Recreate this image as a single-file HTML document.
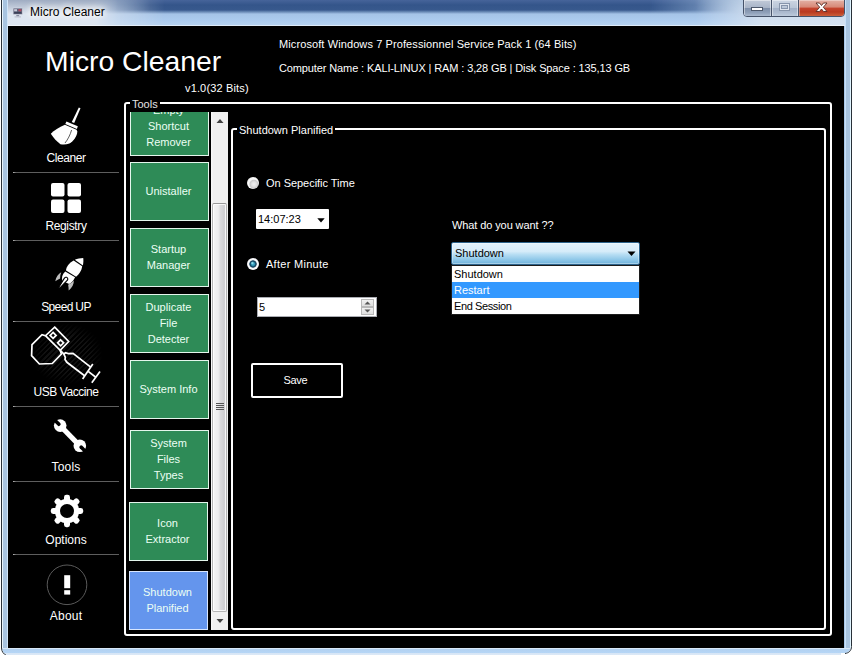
<!DOCTYPE html>
<html><head><meta charset="utf-8">
<style>
html,body{margin:0;padding:0;}
body{width:853px;height:655px;position:relative;overflow:hidden;background:#a9c8ea;font-family:"Liberation Sans",sans-serif;}
.abs{position:absolute;}
#frame{left:0;top:0;width:853px;height:655px;background:#a9c9ea;}
#client{left:8.4px;top:26.2px;width:836px;height:621.6px;background:#000;}
#title{left:30px;top:5px;font-size:12px;color:#000;white-space:nowrap;text-shadow:0 0 6px #fff,0 0 6px #fff,0 0 8px #fff;}
.t{position:absolute;white-space:nowrap;color:#fff;font-size:11px;line-height:1;}
.btn span{position:relative;left:-1px;top:-1px;}
.btn{position:absolute;box-sizing:border-box;width:79px;height:59px;left:130px;background:#2e8b57;border:1px solid #e4f6ec;color:#ecfff4;font-size:11px;display:flex;align-items:center;justify-content:center;text-align:center;line-height:16px;}
.sep{position:absolute;left:13px;width:106px;height:1px;background:linear-gradient(90deg,#bbb 0,#5e5e5e 3px,#5e5e5e 100%);}

.radio{width:12px;height:12px;border-radius:50%;background:radial-gradient(circle at 58% 60%,#f2f2f2 0,#e4e4e4 2.2px,#cdcdcd 4px,#f0f0f0 4.8px,#fff 5.6px,#f4f4f4 6px);}
.radio.on{background:radial-gradient(circle at 44% 42%,rgba(175,245,255,.95) 0,rgba(175,245,255,0) 1.7px),radial-gradient(circle at 50% 50%,#46aeca 0,#2f93b4 1.6px,#185472 2.5px,#143f5a 3.3px,#eef2f8 4px,#fff 5px,#ececf2 6px);}
.spin svg{display:block;}
.spin{width:13px;height:8px;box-sizing:border-box;background:linear-gradient(#f4f4f4,#dcdcdc);outline:1px solid #b8b8b8;outline-offset:-1px;}

.sl{left:8px;width:116px;text-align:center;font-size:12px;}

#tb{left:0;top:0;width:853px;height:26px;overflow:hidden;background:linear-gradient(180deg,#9fbbdc 0,#a3c1e5 12px,#accbee 20px,#b7d3f1 26px);}
#tb-dark{left:0;top:0;width:853px;height:15px;background:linear-gradient(180deg,#46649a 0,#34558a 5px,#38598d 10px,rgba(80,115,170,0) 14px);-webkit-mask-image:linear-gradient(90deg,transparent 92px,rgba(0,0,0,.6) 118px,#000 150px,#000 650px,rgba(0,0,0,.6) 695px,transparent 742px);mask-image:linear-gradient(90deg,transparent 92px,rgba(0,0,0,.6) 118px,#000 150px,#000 650px,rgba(0,0,0,.6) 695px,transparent 742px);}
#tb-left{left:0;top:0;width:230px;height:26px;background:linear-gradient(180deg,#9facc2 0,#c3cddc 8px,#dfe6f0 14px,#dde6f1 26px);-webkit-mask-image:linear-gradient(90deg,#000 0,#000 95px,rgba(0,0,0,.5) 118px,transparent 165px);mask-image:linear-gradient(90deg,#000 0,#000 95px,rgba(0,0,0,.5) 118px,transparent 165px);}
#tb-right{left:680px;top:0;width:173px;height:26px;background:linear-gradient(180deg,#c3d3e6 0,#cfdcec 10px,#d4e2f2 26px);-webkit-mask-image:linear-gradient(90deg,transparent 15px,rgba(0,0,0,.5) 48px,#000 80px);mask-image:linear-gradient(90deg,transparent 15px,rgba(0,0,0,.5) 48px,#000 80px);}
#tb-line{left:7px;top:25px;width:839px;height:1px;background:rgba(255,255,255,.55);}
#edgeL{left:0;top:0;width:8px;height:655px;background:linear-gradient(90deg,#fff 0,#fff 1px,#283038 1px,#283038 2px,#e8f4fc 2px,#e8f4fc 3px,#a8c4e0 3px,#a8c4e0 7px,#d0e4f8 7px,#d0e4f8 8px);}
#edgeR{left:845px;top:0;width:8px;height:655px;background:linear-gradient(90deg,#c8e0f8 0,#c8e0f8 1px,#a8c4e0 1px,#a8c4e0 5px,#e0f4ff 5px,#e0f4ff 6px,#283038 6px,#283038 7px,#fff 7px);}
#edgeB{left:2px;top:648px;width:849px;height:7px;background:linear-gradient(180deg,#d8e8f8 0,#d8e8f8 1px,#b2d1f1 1px,#b6d6f6 5px,#d6e5f6 5px,#dce9f7 7px);}
</style></head><body>
<div id="frame" class="abs"></div>
<div id="tb" class="abs">
 <div class="abs" id="tb-dark"></div>
 <div class="abs" id="tb-left"></div>
 <div class="abs" id="tb-right"></div>
 <div class="abs" id="tb-line"></div>
</div>
<div class="abs" id="edgeL"></div>
<div class="abs" id="edgeR"></div>
<div class="abs" id="edgeB"></div>

<svg class="abs" style="left:0;top:645px;" width="12" height="10" viewBox="0 0 12 10">
 <path d="M0 0 H2 V3 C2 6 4 9 7 10 H0Z" fill="#fff"/>
 <path d="M1.5 0 V3 C1.5 6.5 3.5 9 6.5 10.5" fill="none" stroke="#283038" stroke-width="1"/>
</svg>
<svg class="abs" style="left:841px;top:645px;" width="12" height="10" viewBox="0 0 12 10">
 <path d="M12 0 H10 V1 C10 5 8 7.5 4 8 H0 V10 H12Z" fill="#fff"/>
 <path d="M10.5 0 V1.5 C10.5 5.5 8 8 4 8.5" fill="none" stroke="#283038" stroke-width="1"/>
</svg>
<svg class="abs" id="appicon" style="left:11.5px;top:6.5px;" width="11.5" height="11.5" viewBox="0 0 16 16">
 <rect x="1.5" y="1.5" width="13" height="9" rx="1" fill="#5a5f78" stroke="#d9dce6" stroke-width="1"/>
 <rect x="3" y="3" width="4" height="3" fill="#c9ccd8"/><rect x="9" y="3" width="4" height="3" fill="#b04a5a"/>
 <rect x="3" y="7" width="10" height="2" fill="#3b3f55"/>
 <rect x="6" y="11" width="4" height="2" fill="#8a8fa3"/><rect x="3.5" y="13" width="9" height="1.5" fill="#b9bccb"/>
</svg>
<div id="title" class="abs">Micro Cleaner</div>
<!-- caption buttons -->
<div class="abs" id="cap" style="left:743px;top:-1px;width:102px;height:18px;box-sizing:border-box;border:1px solid #46536a;border-radius:0 0 4px 4px;overflow:hidden;">
 <div class="abs" style="left:0;top:0;width:27px;height:17px;background:linear-gradient(180deg,#c2cbd9 0,#a9b5c8 45%,#7f90aa 50%,#8fa0b9 75%,#b2c0d4 100%);box-shadow:inset 0 0 0 1px rgba(255,255,255,.45);"></div>
 <div class="abs" style="left:27px;top:0;width:1px;height:17px;background:#46536a;"></div>
 <div class="abs" style="left:28px;top:0;width:26px;height:17px;background:linear-gradient(180deg,#ccd5e2 0,#bac6d7 45%,#a3b1c7 50%,#adbbd0 75%,#c2cfdf 100%);box-shadow:inset 0 0 0 1px rgba(255,255,255,.45);"></div>
 <div class="abs" style="left:54px;top:0;width:1px;height:17px;background:#46536a;"></div>
 <div class="abs" style="left:55px;top:0;width:46px;height:17px;background:linear-gradient(180deg,#e3b1a5 0,#d88a78 40%,#c4432c 50%,#b9391f 70%,#d0673f 100%);box-shadow:inset 0 0 0 1px rgba(255,255,255,.35);"></div>
</div>
<svg class="abs" style="left:743px;top:0;" width="102" height="17" viewBox="0 0 102 17">
 <rect x="8.5" y="7.5" width="11" height="3" fill="#fff" stroke="#4d586b" stroke-width="1"/>
 <rect x="36.5" y="3.5" width="10" height="7" fill="none" stroke="#8795ab" stroke-width="1"/>
 <rect x="37.5" y="4.5" width="8" height="5" fill="none" stroke="#dfe5ee" stroke-width="1"/>
 <rect x="38.5" y="5.5" width="6" height="3" fill="none" stroke="#8795ab" stroke-width="1"/>
 <path d="M73 3 L76.5 3 L78.5 5.5 L80.5 3 L84 3 L80.3 7.2 L84 11.5 L80.5 11.5 L78.5 9 L76.5 11.5 L73 11.5 L76.7 7.2 Z" fill="#fff" stroke="#5a2a22" stroke-width="0.9" stroke-linejoin="round"/>
</svg>
<div id="client" class="abs"></div>

<!-- header -->
<div class="t" id="big" style="left:45.1px;top:47px;font-size:28.3px;">Micro Cleaner</div>
<div class="t" id="ver" style="left:185px;top:83px;letter-spacing:0.15px;">v1.0(32 Bits)</div>
<div class="t" id="l1" style="left:279px;top:39px;letter-spacing:0.1px;">Microsoft Windows 7 Professionnel Service Pack 1 (64 Bits)</div>
<div class="t" id="l2" style="left:279px;top:63px;letter-spacing:-0.12px;">Computer Name : KALI-LINUX | RAM : 3,28 GB | Disk Space : 135,13 GB</div>

<!-- groupboxes -->
<div class="abs" id="gb1" style="left:124px;top:102px;width:708px;height:534px;box-sizing:border-box;border:2px solid #fff;border-radius:3px;"></div>
<div class="t" id="gb1l" style="left:130px;top:99px;color:#e4e4e4;background:#000;padding:0 2px;">Tools</div>
<div class="abs" id="gb2" style="left:231px;top:128px;width:595px;height:502px;box-sizing:border-box;border:2px solid #fff;border-radius:3px;"></div>
<div class="t" id="gb2l" style="left:237px;top:125px;background:#000;padding:0 2px;">Shutdown Planified</div>


<!-- tool buttons -->
<div class="abs" id="panel" style="left:126px;top:112px;width:86px;height:518px;overflow:hidden;">
 <div class="btn" style="left:4px;top:-15px;"><span>Empty<br>Shortcut<br>Remover</span></div>
 <div class="btn" style="left:4px;top:50px;"><span>Unistaller</span></div>
 <div class="btn" style="left:4px;top:116px;"><span>Startup<br>Manager</span></div>
 <div class="btn" style="left:4px;top:182px;"><span>Duplicate<br>File<br>Detecter</span></div>
 <div class="btn" style="left:4px;top:248px;"><span>System Info</span></div>
 <div class="btn" style="left:4px;top:318px;"><span>System<br>Files<br>Types</span></div>
 <div class="btn" style="left:3px;top:390px;"><span>Icon<br>Extractor</span></div>
 <div class="btn" style="left:3px;top:459px;background:#6495ed;border-color:#d8e6ff;"><span>Shutdown<br>Planified</span></div>
</div>
<!-- scrollbar -->
<div class="abs" id="sb" style="left:211px;top:112px;width:17px;height:518px;background:linear-gradient(90deg,#fafafa 0,#f0f0f0 2px,#f0f0f0 100%);"></div>
<div class="abs" id="thumb" style="left:212px;top:203px;width:14.5px;height:409px;box-sizing:border-box;border:1px solid #b4b4b4;border-top-color:#989898;border-radius:2px;box-shadow:inset 0 0 0 1px rgba(255,255,255,.8);background:linear-gradient(90deg,#f4f4f4 0,#ededee 40%,#dcdcde 55%,#cfcfd2 85%,#dadadc 100%);"></div>
<svg class="abs" style="left:211.5px;top:112px;" width="16" height="518" viewBox="0 0 16 518">
 <path d="M4.5 11 L8 7 L11.5 11 Z" fill="#404040"/>
 <path d="M4.5 507 L8 511 L11.5 507 Z" fill="#404040"/>
 <g stroke="#555" stroke-width="1"><path d="M4 291.5h8M4 293.5h8M4 295.5h8M4 297.5h8"/></g>
</svg>

<!-- main controls -->
<div class="abs radio" id="r1" style="left:247px;top:177px;"></div>
<div class="t" id="t_r1" style="left:266px;top:178px;letter-spacing:-0.03px;">On Sepecific Time</div>
<div class="abs" id="timebox" style="left:256px;top:209px;width:73px;height:20px;background:#fff;border-radius:1px;"></div>
<div class="t" id="t_time" style="left:258px;top:214px;color:#000;font-size:11px;">14:07:23</div>
<svg class="abs" style="left:316.5px;top:218px;" width="8" height="5"><path d="M0.3 0.3h7.4L4 4.6Z" fill="#000"/></svg>
<div class="abs radio on" id="r2" style="left:247px;top:258px;"></div>
<div class="t" id="t_r2" style="left:266px;top:259px;letter-spacing:0.28px;">After Minute</div>
<div class="abs" id="numbox" style="left:257px;top:297px;width:120px;height:20px;background:#fff;box-sizing:border-box;border:1px solid #abadb3;"></div>
<div class="t" id="t_num" style="left:259px;top:302px;color:#000;font-size:11px;">5</div>
<div class="abs spin" style="left:361px;top:299px;"><svg width="13" height="8"><path d="M3.5 5.5L6.5 2.5L9.5 5.5Z" fill="#555"/></svg></div>
<div class="abs spin" style="left:361px;top:307px;"><svg width="13" height="8"><path d="M3.5 2.5L6.5 5.5L9.5 2.5Z" fill="#555"/></svg></div>
<div class="abs" id="save" style="left:251px;top:363px;width:92px;height:35px;box-sizing:border-box;border:2px solid #fff;border-radius:2px;"></div>
<div class="t" id="t_save" style="left:283.5px;top:375px;letter-spacing:-0.3px;">Save</div>

<div class="t" id="t_what" style="left:452px;top:220px;letter-spacing:-0.1px;">What do you want ??</div>
<div class="abs" id="combo" style="left:451px;top:242px;width:189px;height:23px;box-sizing:border-box;border:1px solid #2c628b;border-radius:2px;background:linear-gradient(180deg,#e3f1fb 0,#d6ecf9 40%,#b6ddf3 55%,#8ec7e8 80%,#70b2db 100%);box-shadow:inset 0 0 0 1px rgba(255,255,255,.35);"></div>
<div class="t" id="t_combo" style="left:455px;top:248px;color:#000;">Shutdown</div>
<svg class="abs" style="left:627px;top:251px;" width="10" height="6"><path d="M0.5 0.5h8L4.5 5Z" fill="#000"/></svg>
<div class="abs" id="list" style="left:451px;top:265px;width:189px;height:50px;box-sizing:border-box;border:1px solid #1c1c1c;background:#fff;"></div>
<div class="abs" id="hl" style="left:452px;top:282px;width:187px;height:16px;background:#3399ff;"></div>
<div class="t" id="t_i1" style="left:454px;top:269px;color:#000;">Shutdown</div>
<div class="t" id="t_i2" style="left:454px;top:285px;color:#fff;">Restart</div>
<div class="t" id="t_i3" style="left:454px;top:301px;color:#000;letter-spacing:-0.4px;">End Session</div>

<!-- sidebar -->
<div class="sep" style="top:172px;"></div>
<div class="sep" style="top:240px;"></div>
<div class="sep" style="top:321px;"></div>
<div class="sep" style="top:406px;"></div>
<div class="sep" style="top:481px;"></div>
<div class="sep" style="top:554px;"></div>
<div class="t sl" id="s1" style="letter-spacing:-0.43px;top:152px;">Cleaner</div>
<div class="t sl" id="s2" style="letter-spacing:-0.35px;top:220px;">Registry</div>
<div class="t sl" id="s3" style="letter-spacing:-0.65px;top:301px;">Speed UP</div>
<div class="t sl" id="s4" style="letter-spacing:-0.45px;top:386px;">USB Vaccine</div>
<div class="t sl" id="s5" style="letter-spacing:0.2px;top:461px;">Tools</div>
<div class="t sl" id="s6" style="letter-spacing:0px;top:534px;">Options</div>
<div class="t sl" id="s7" style="letter-spacing:0.2px;top:610px;">About</div>
<div class="abs" id="hatch" style="left:32px;top:324px;width:70px;height:60px;background:repeating-linear-gradient(135deg,rgba(255,255,255,.065) 0,rgba(255,255,255,.065) 1.6px,transparent 1.6px,transparent 3.6px);-webkit-mask-image:radial-gradient(ellipse at 50% 50%,#000 45%,transparent 72%);mask-image:radial-gradient(ellipse at 50% 50%,#000 45%,transparent 72%);"></div>
<svg class="abs" id="icons" style="left:0;top:0;" width="130" height="655" viewBox="0 0 130 655">
 <!-- broom -->
 <g fill="#fff">
  <path d="M78.8 107.4 L80.5 108.2 L74.2 123 L71.8 122 Z"/>
  <path d="M66.4 121.4 L77.8 126.3 L76.9 129 L65.3 124 Z"/>
  <path d="M64.9 124.8 C59 127.5 54 130.5 50.8 133.8 C53.5 138 57 141.8 60.4 144.2 C63.5 144.7 66.5 144.5 69.4 143.6 C73.8 140.8 77.2 136 77.3 131.5 L76.6 129.8 Z"/>
 </g>
 <path d="M71.6 130 C70.2 135 67.8 139.5 65 143" stroke="#333" stroke-width="0.8" fill="none"/>
 <!-- registry -->
 <g fill="#fff">
  <rect x="51" y="183" width="13.5" height="13.5" rx="2"/><rect x="67.5" y="183" width="13.5" height="13.5" rx="2"/>
  <rect x="51" y="199.5" width="13.5" height="13.5" rx="2"/><rect x="67.5" y="199.5" width="13.5" height="13.5" rx="2"/>
 </g>
 <!-- rocket -->
 <g transform="translate(46 250) scale(0.06868)">
  <path d="M542 116 C500 118 455 128 420 142 L537 224 C545 190 546 150 542 116Z" fill="#fff"/>
  <path d="M402 152 L527 238 C520 300 480 360 438 388 L292 300 C290 245 340 185 402 152Z" fill="#fff"/>
  <path d="M280 314 L424 398 C405 440 375 475 338 494 L240 452 C222 410 235 355 280 314Z" fill="#fff"/>
  <path d="M222 325 C180 345 145 395 135 455 C160 440 185 425 205 415 C205 385 210 355 222 325Z" fill="#bdbdbd"/>
  <path d="M405 445 C410 495 380 550 330 588 C330 560 328 530 322 505 C355 490 385 470 405 445Z" fill="#bdbdbd"/>
  <path d="M300 398 C318 405 322 425 312 440 L200 555 L185 545 L268 410 C275 398 288 394 300 398Z" fill="#fff" stroke="#000" stroke-width="16"/>
 </g>
 <!-- usb vaccine -->
 <g fill="none" stroke="#fff" stroke-width="1.7" stroke-linejoin="miter">
  <path d="M54.7 327.1 L68.7 341.5 L60.2 350.3 L45.5 335.7 Z"/>
  <path d="M53.1 332.4 L56.1 335.4 L53.1 338.4 L50.1 335.4 Z"/>
  <path d="M60.6 339.8 L63.6 342.8 L60.6 345.8 L57.6 342.8 Z"/>
  <path d="M45.5 335.7 L42 334.6 L32 344.6 L31.6 355.6 L39.4 364 L52.3 363.5 L61.4 354 L60.2 350.3"/>
  <path d="M60.2 350.3 L64 354.2 L65.4 352.8 L68.4 353.6 L73 353.4 L90.7 367.2"/>
  <path d="M64 354.2 L65.3 357.4 L65 359.6 L66.9 362.3 L84.6 375.7"/>
  <path d="M92.8 364 L82.6 379"/>
  <path d="M88.2 371.4 L95.8 377.2"/>
  <path d="M100 371.4 L91.8 382.8"/>
 </g>
 <!-- wrench -->
 <g>
  <path d="M60.5 426 L79.5 445.5" stroke="#fff" stroke-width="5.2" fill="none"/>
  <circle cx="60.2" cy="425.6" r="6.3" fill="#fff"/>
  <circle cx="79.8" cy="445.8" r="6.3" fill="#fff"/>
  <rect x="58.4" y="416" width="3.6" height="9.4" rx="1.6" fill="#000" transform="rotate(-45 60.2 425.6)"/>
  <rect x="78" y="446" width="3.6" height="9.4" rx="1.6" fill="#000" transform="rotate(-45 79.8 445.8)"/>
 </g>
 <!-- gear -->
 <g fill="#fff">
  <circle cx="67" cy="511" r="12.2"/>
  <g id="teeth">
   <rect x="64" y="494.8" width="6" height="9" rx="2.4"/>
   <rect x="64" y="494.8" width="6" height="9" rx="2.4" transform="rotate(45 67 511)"/>
   <rect x="64" y="494.8" width="6" height="9" rx="2.4" transform="rotate(90 67 511)"/>
   <rect x="64" y="494.8" width="6" height="9" rx="2.4" transform="rotate(135 67 511)"/>
   <rect x="64" y="494.8" width="6" height="9" rx="2.4" transform="rotate(180 67 511)"/>
   <rect x="64" y="494.8" width="6" height="9" rx="2.4" transform="rotate(225 67 511)"/>
   <rect x="64" y="494.8" width="6" height="9" rx="2.4" transform="rotate(270 67 511)"/>
   <rect x="64" y="494.8" width="6" height="9" rx="2.4" transform="rotate(315 67 511)"/>
  </g>
 </g>
 <circle cx="67" cy="511" r="7" fill="#000"/>
 <!-- about -->
 <circle cx="67" cy="584.8" r="19.8" fill="none" stroke="#5a5a5a" stroke-width="1"/>
 <rect x="64.2" y="575.2" width="6" height="13" fill="#fff"/>
 <rect x="64.2" y="590.2" width="6" height="4.4" fill="#fff"/>
</svg>
</body></html>
